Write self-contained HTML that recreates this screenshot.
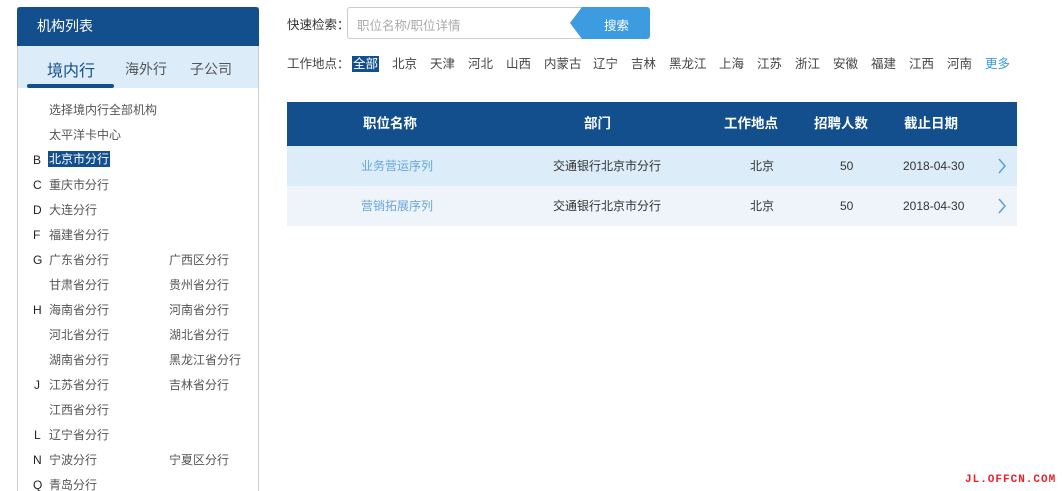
<!DOCTYPE html><html><head><meta charset="utf-8"><style>
*{margin:0;padding:0;box-sizing:border-box}
html{width:1062px;height:491px;overflow:hidden}
body{width:1062px;height:491px;background:#fff;position:relative;overflow:hidden;font-family:"Liberation Sans","Noto Sans CJK SC",sans-serif;font-size:12px;color:#333}
.a{position:absolute;white-space:nowrap}
.panel{position:absolute;left:17px;top:7px;width:242px;height:484px;border:1px solid #ccc;border-top:none;border-bottom:none}
.ph{position:absolute;left:17px;top:7px;width:242px;height:39px;background:#134f8c;color:#fff;font-size:14px;line-height:39px;padding-left:20px;border-radius:3px 3px 0 0}
.tabs{position:absolute;left:18px;top:46px;width:240px;height:42px;background:#dcecf8}
.r{position:absolute;font-size:12px;color:#555;line-height:16px}
.L{color:#222}
.loc span{position:absolute;top:56px;font-size:12.5px;color:#444;line-height:16px}
.th{position:absolute;top:102px;height:44px;line-height:44px;color:#fff;font-weight:bold;font-size:13.5px}
.td{position:absolute;font-size:12px;line-height:40px}
</style></head><body>
<div class="panel"></div>
<div class="ph">机构列表</div>
<div class="tabs"></div>
<div class="a" style="left:47px;top:57px;font-size:16px;color:#134f8c">境内行</div>
<div class="a" style="left:27px;top:84px;width:87px;height:4px;background:#134f8c;border-radius:2px"></div>
<div class="a" style="left:125px;top:59px;font-size:14px;color:#555">海外行</div>
<div class="a" style="left:190px;top:59px;font-size:14px;color:#555">子公司</div>
<div class="r" style="left:49px;top:102px">选择境内行全部机构</div>
<div class="r" style="left:49px;top:127px">太平洋卡中心</div>
<div class="r L" style="left:33px;top:152px">B</div><div class="r" style="left:48px;top:151px;background:#134f8c;color:#fff;padding:0 1px">北京市分行</div>
<div class="r L" style="left:33px;top:177px">C</div><div class="r" style="left:49px;top:177px">重庆市分行</div>
<div class="r L" style="left:33px;top:202px">D</div><div class="r" style="left:49px;top:202px">大连分行</div>
<div class="r L" style="left:33px;top:227px">F</div><div class="r" style="left:49px;top:227px">福建省分行</div>
<div class="r L" style="left:33px;top:252px">G</div><div class="r" style="left:49px;top:252px">广东省分行</div><div class="r" style="left:169px;top:252px">广西区分行</div>
<div class="r" style="left:49px;top:277px">甘肃省分行</div><div class="r" style="left:169px;top:277px">贵州省分行</div>
<div class="r L" style="left:33px;top:302px">H</div><div class="r" style="left:49px;top:302px">海南省分行</div><div class="r" style="left:169px;top:302px">河南省分行</div>
<div class="r" style="left:49px;top:327px">河北省分行</div><div class="r" style="left:169px;top:327px">湖北省分行</div>
<div class="r" style="left:49px;top:352px">湖南省分行</div><div class="r" style="left:169px;top:352px">黑龙江省分行</div>
<div class="r L" style="left:34px;top:377px">J</div><div class="r" style="left:49px;top:377px">江苏省分行</div><div class="r" style="left:169px;top:377px">吉林省分行</div>
<div class="r" style="left:49px;top:402px">江西省分行</div>
<div class="r L" style="left:34px;top:427px">L</div><div class="r" style="left:49px;top:427px">辽宁省分行</div>
<div class="r L" style="left:33px;top:452px">N</div><div class="r" style="left:49px;top:452px">宁波分行</div><div class="r" style="left:169px;top:452px">宁夏区分行</div>
<div class="r L" style="left:33px;top:477px">Q</div><div class="r" style="left:49px;top:477px">青岛分行</div>

<div class="a" style="left:287px;top:14px;font-size:12.5px">快速检索：</div>
<div class="a" style="left:347px;top:7px;width:300px;height:32px;border:1px solid #ccc;border-radius:3px"></div>
<div class="a" style="left:357px;top:15px;font-size:12.5px;color:#aaa">职位名称/职位详情</div>
<svg class="a" style="left:570px;top:7px" width="80" height="32"><path d="M12 0H77a3 3 0 0 1 3 3V29a3 3 0 0 1-3 3H12L0 16Z" fill="#3d9be0"/></svg>
<div class="a" style="left:604px;top:15px;font-size:12.5px;color:#fff">搜索</div>

<div class="loc">
<span style="left:287px">工作地点：</span>
<span style="left:352px;background:#134f8c;color:#fff;padding:0 1px;top:56px">全部</span>
<span style="left:392px">北京</span><span style="left:430px">天津</span><span style="left:468px">河北</span><span style="left:506px">山西</span><span style="left:544px">内蒙古</span><span style="left:593px">辽宁</span><span style="left:631px">吉林</span><span style="left:669px">黑龙江</span><span style="left:719px">上海</span><span style="left:757px">江苏</span><span style="left:795px">浙江</span><span style="left:833px">安徽</span><span style="left:871px">福建</span><span style="left:909px">江西</span><span style="left:947px">河南</span><span style="left:985px;color:#3d9be0">更多</span>
</div>

<div class="a" style="left:287px;top:102px;width:730px;height:44px;background:#134f8c"></div>
<div class="a" style="left:287px;top:146px;width:730px;height:40px;background:#dcecf8"></div>
<div class="a" style="left:287px;top:186px;width:730px;height:40px;background:#eef4fa"></div>
<div class="th" style="left:363px">职位名称</div>
<div class="th" style="left:584px">部门</div>
<div class="th" style="left:724px">工作地点</div>
<div class="th" style="left:814px">招聘人数</div>
<div class="th" style="left:904px">截止日期</div>
<div class="td" style="left:361px;top:146px;color:#6aa6d8">业务营运序列</div>
<div class="td" style="left:553px;top:146px">交通银行北京市分行</div>
<div class="td" style="left:750px;top:146px">北京</div>
<div class="td" style="left:840px;top:146px">50</div>
<div class="td" style="left:903px;top:146px">2018-04-30</div>
<svg class="a" style="left:997px;top:158px" width="10" height="16"><path d="M2 1L8 8L2 15" stroke="#5aa0d8" stroke-width="1.5" fill="none"/></svg>
<div class="td" style="left:361px;top:186px;color:#6aa6d8">营销拓展序列</div>
<div class="td" style="left:553px;top:186px">交通银行北京市分行</div>
<div class="td" style="left:750px;top:186px">北京</div>
<div class="td" style="left:840px;top:186px">50</div>
<div class="td" style="left:903px;top:186px">2018-04-30</div>
<svg class="a" style="left:997px;top:198px" width="10" height="16"><path d="M2 1L8 8L2 15" stroke="#5aa0d8" stroke-width="1.5" fill="none"/></svg>

<div class="a" style="left:965px;top:474px;font-size:11px;font-weight:bold;color:#e8202a;font-family:'Liberation Mono',monospace;letter-spacing:1px">JL.OFFCN.COM</div>
</body></html>
